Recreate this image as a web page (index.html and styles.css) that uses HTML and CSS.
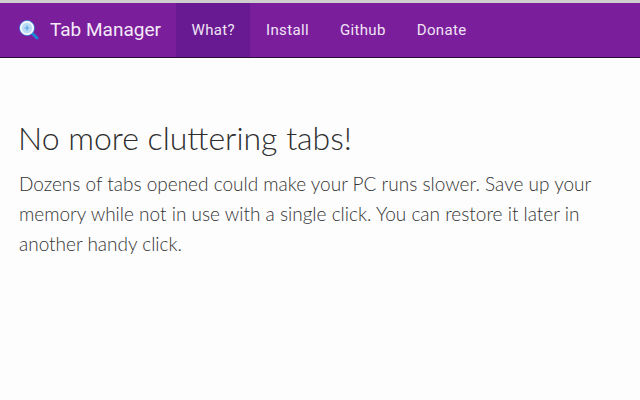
FILE: index.html
```html
<!DOCTYPE html>
<html lang="en">
<head>
<meta charset="utf-8">
<title>Tab Manager</title>
<link rel="stylesheet" href="styles.css">
</head>
<body>
<header class="navbar">
  <a class="brand" href="#">
    <svg class="brand-icon" width="20" height="20" viewBox="0 0 20 20" aria-hidden="true">
      <path d="M12.5 12.5 L18 18" stroke="#1e88d8" stroke-width="3" stroke-linecap="round"/>
      <circle cx="8" cy="8" r="6.3" fill="#bcdcf6" stroke="#f2f7fc" stroke-width="2.2"/>
      <circle cx="8" cy="8" r="7.6" fill="none" stroke="#2a7fd0" stroke-width=".7"/>
      <path d="M5.5 8h5M8 5.5v5" stroke="#5da6e6" stroke-width="1.2"/>
    </svg>
    <span>Tab Manager</span>
  </a>
  <nav class="nav">
    <a class="nav-link active" href="#">What?</a>
    <a class="nav-link" href="#">Install</a>
    <a class="nav-link" href="#">Github</a>
    <a class="nav-link" href="#">Donate</a>
  </nav>
</header>
<main class="content">
  <h1 class="title">No more cluttering tabs!</h1>
  <p class="lead">Dozens of tabs opened could make your PC runs slower. Save up your memory while not in use with a single click. You can restore it later in another handy click.</p>
</main>
</body>
</html>
```
FILE: styles.css
```css
* { box-sizing: border-box; }
html, body { margin: 0; height: 100%; }
body {
  background: #fdfdfd;
  border-top: 3px solid #cfcfcf;
  font-family: "Lato", "Liberation Sans", sans-serif;
  overflow: hidden;
}
a { text-decoration: none; }
.navbar {
  display: flex;
  height: 55px;
  background: #7b1e9c;
  border-bottom: 1px solid #2a0a38;
}
.brand {
  display: flex;
  align-items: center;
  gap: 11px;
  width: 176px;
  padding: 0 0 1px 19px;
  color: #f4e9f8;
  font-family: "Roboto", sans-serif;
  font-size: 19px;
}
.brand-icon { flex: none; }
.nav { display: flex; }
.nav-link {
  display: flex;
  align-items: center;
  padding: 0 15.5px 1px;
  color: #f0e4f5;
  font-family: "Roboto", sans-serif;
  font-size: 15px;
  letter-spacing: 0.35px;
}
.active { background: #681a92; }
.content { padding: 60px 19px 0; }
.title {
  margin: 0 0 0 -1px;
  color: #2e2e2e;
  font-size: 32px;
  font-weight: 300;
  line-height: 40px;
}
.lead {
  margin: 11px 0 0;
  color: #333;
  font-size: 19px;
  font-weight: 300;
  line-height: 30px;
}
```
